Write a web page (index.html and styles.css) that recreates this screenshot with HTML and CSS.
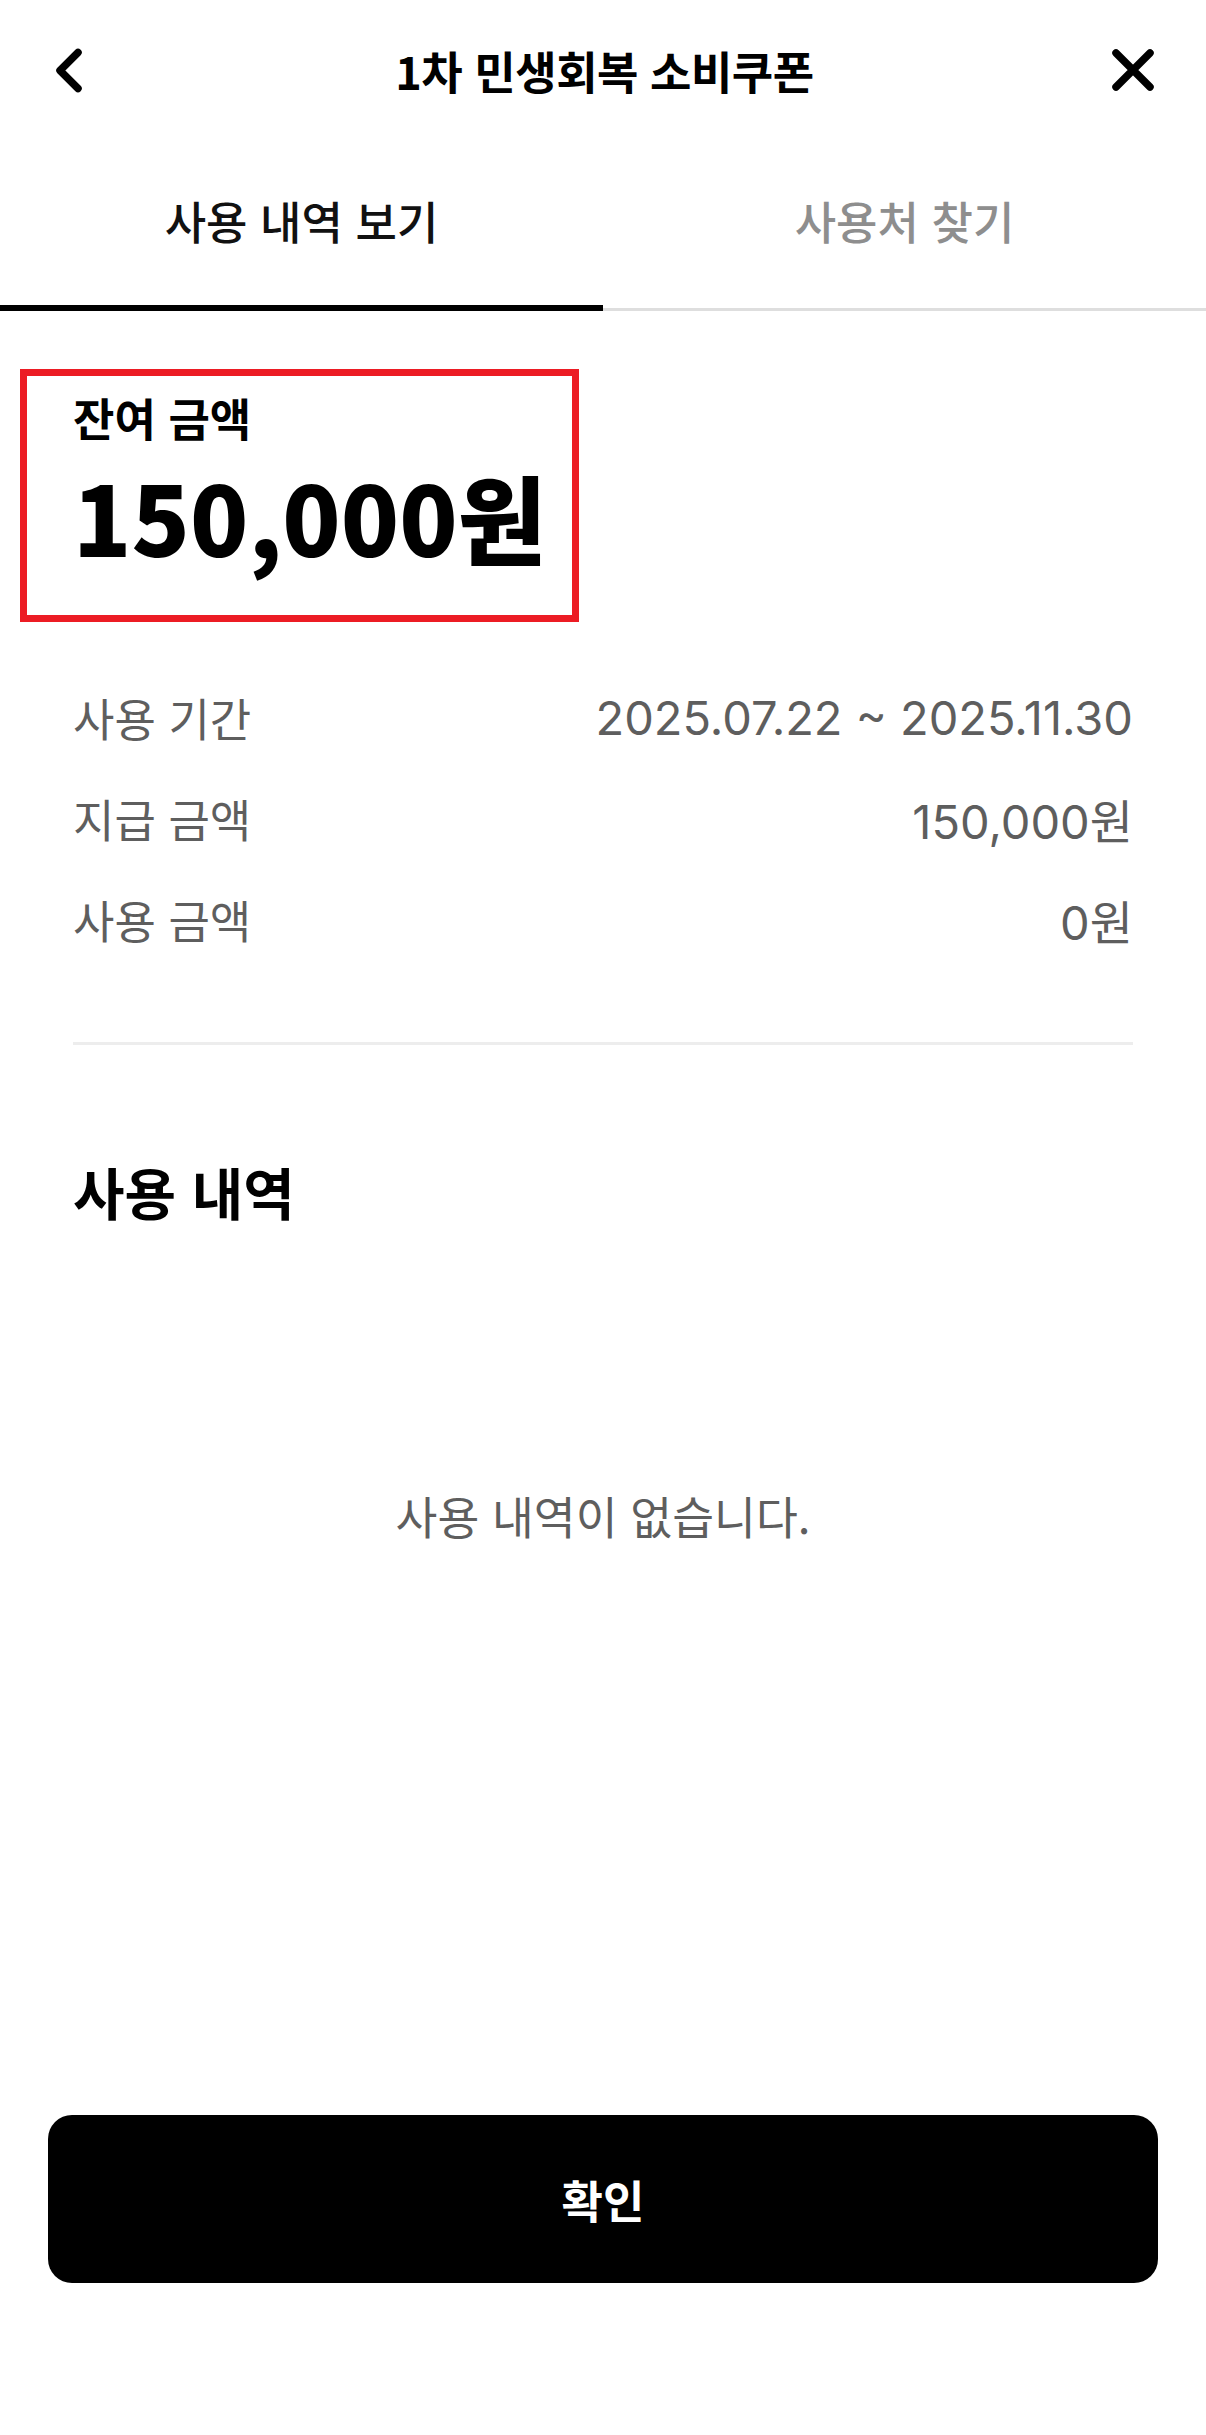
FILE: index.html
```html
<!DOCTYPE html>
<html lang="ko">
<head>
<meta charset="utf-8">
<title>1차 민생회복 소비쿠폰</title>
<link rel="stylesheet" href="styles.css">
</head>
<body>
<div class="page">
  <header class="topbar">
    <div class="topbar-left">
      <svg class="icon-back" width="29" height="45" viewBox="0 0 29 45"><polyline points="24,4.5 6,22.5 24,40.5" fill="none" stroke="#000" stroke-width="7.5" stroke-linecap="round" stroke-linejoin="round"/></svg>
    </div>
    <h1 class="title">1차 민생회복 소비쿠폰</h1>
    <div class="topbar-right">
      <svg class="icon-close" width="44" height="42" viewBox="0 0 44 42"><path d="M5 4 L39 38 M39 4 L5 38" fill="none" stroke="#000" stroke-width="7.5" stroke-linecap="round"/></svg>
    </div>
  </header>

  <nav class="tabs">
    <div class="tab tab-active">사용 내역 보기</div>
    <div class="tab">사용처 찾기</div>
  </nav>

  <section class="balance">
    <div class="balance-label">잔여 금액</div>
    <div class="balance-amount">150,000원</div>
  </section>

  <section class="info">
    <div class="info-row"><span class="info-key">사용 기간</span><span class="info-val">2025.07.22 ~ 2025.11.30</span></div>
    <div class="info-row"><span class="info-key">지급 금액</span><span class="info-val">150,000원</span></div>
    <div class="info-row"><span class="info-key">사용 금액</span><span class="info-val">0원</span></div>
  </section>

  <hr class="divider">

  <h2 class="history-title">사용 내역</h2>
  <p class="empty">사용 내역이 없습니다.</p>

  <div class="footer">
    <button class="confirm">확인</button>
  </div>
</div>
</body>
</html>
```

FILE: styles.css
```css
html, body {
  margin: 0;
  padding: 0;
  background: #fff;
}
body {
  font-family: "Noto Sans CJK KR", "Noto Sans", sans-serif;
  color: #000;
}
.page {
  width: 1206px;
  height: 2435px;
  display: flex;
  flex-direction: column;
}
.topbar {
  height: 140px;
  display: grid;
  grid-template-columns: 1fr auto 1fr;
  align-items: center;
  padding: 0 51px 0 54px;
}
.topbar-left { display: flex; justify-content: flex-start; }
.topbar-right { display: flex; justify-content: flex-end; }
.icon-back, .icon-close { display: block; }
.title {
  margin: 0;
  font-size: 45px;
  font-weight: 700;
  letter-spacing: -0.5px;
  line-height: 1;
}
.tabs {
  display: flex;
  height: 171px;
}
.tab {
  flex: 1;
  display: flex;
  align-items: center;
  justify-content: center;
  padding-bottom: 8px;
  font-size: 45px;
  font-weight: 500;
  color: #8e8e8e;
  border-bottom: 3px solid #dedede;
}
.tab-active {
  color: #111;
  border-bottom: 6px solid #000;
  padding-bottom: 5px;
}
.balance {
  margin: 58px 0 0 20px;
  width: 559px;
  height: 253px;
  box-sizing: border-box;
  border: 7px solid #ec1c24;
  padding: 14px 0 0 46px;
}
.balance-label {
  font-size: 45px;
  font-weight: 700;
  line-height: 56px;
}
.balance-amount {
  font-size: 96px;
  font-weight: 900;
  line-height: 120px;
  margin-top: 10px;
}
.info {
  margin-top: 45px;
  padding: 0 73px;
  display: flex;
  flex-direction: column;
}
.info-row {
  height: 101px;
  display: flex;
  justify-content: space-between;
  align-items: center;
  font-size: 45px;
  color: #5e5e5e;
}
.info-val {
  font-family: "Inter", "Noto Sans CJK KR", sans-serif;
  font-size: 47px;
}
.divider {
  margin: 72px 73px 0;
  border: 0;
  height: 3px;
  background: #ededed;
}
.history-title {
  margin: 111px 73px 0;
  font-size: 56px;
  font-weight: 700;
  line-height: 70px;
}
.empty {
  margin: 259px 0 0;
  text-align: center;
  font-size: 45.5px;
  color: #5e5e5e;
  line-height: 60px;
}
.footer {
  margin-top: auto;
  padding: 0 48px 152px;
}
.confirm {
  display: block;
  width: 100%;
  height: 168px;
  border: 0;
  border-radius: 24px;
  background: #000;
  color: #fff;
  font-family: "Noto Sans CJK KR", "Noto Sans", sans-serif;
  font-size: 45px;
  font-weight: 700;
}
```
